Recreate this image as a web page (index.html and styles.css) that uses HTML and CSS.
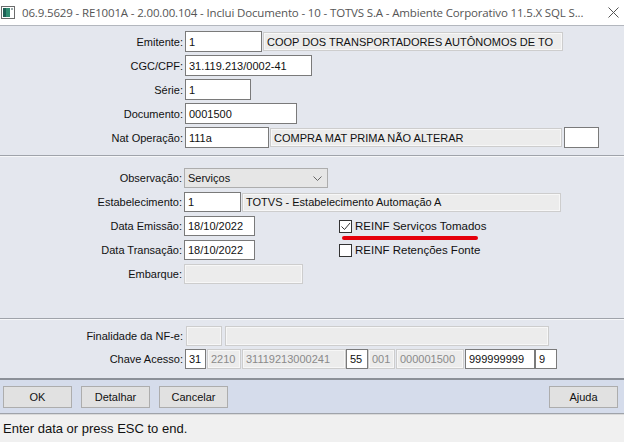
FILE: index.html
```html
<!DOCTYPE html>
<html lang="pt">
<head>
  <meta charset="UTF-8">
  <title>Inclui Documento</title>
  <link rel="stylesheet" href="styles.css">
</head>
<body>
  <div class="window">
    <div class="titlebar">
      <svg class="app-icon" width="14" height="13" viewBox="0 0 14 13">
        <rect x="0.5" y="0.5" width="13" height="12" fill="#fff" stroke="#6b6b6b"/>
        <rect x="2" y="2" width="7" height="9" fill="#2f8c70"/>
        <rect x="2" y="2" width="3" height="9" fill="#1e5f55"/>
        <rect x="10" y="2" width="2" height="2" fill="#9aa"/>
      </svg>
      <span class="title">06.9.5629 - RE1001A - 2.00.00.104 - Inclui Documento - 10 - TOTVS S.A - Ambiente Corporativo 11.5.X SQL S...</span>
      <svg class="close" width="11" height="11" viewBox="0 0 11 11">
        <path d="M0.5 0.5 L10.5 10.5 M10.5 0.5 L0.5 10.5" stroke="#555" stroke-width="1"/>
      </svg>
    </div>

    <!-- cabecalho do documento -->
    <div class="section sec-doc">
      <div class="row">
        <label>Emitente:</label>
        <span class="fld w-77 mr-1">1</span>
        <span class="fld off w-300 dark">COOP DOS TRANSPORTADORES AUTÔNOMOS DE TO</span>
      </div>
      <div class="row">
        <label>CGC/CPF:</label>
        <span class="fld w-127">31.119.213/0002-41</span>
      </div>
      <div class="row">
        <label>Série:</label>
        <span class="fld w-66">1</span>
      </div>
      <div class="row">
        <label>Documento:</label>
        <span class="fld w-112">0001500</span>
      </div>
      <div class="row">
        <label>Nat Operação:</label>
        <span class="fld w-84 mr-1">111a</span>
        <span class="fld off w-292 dark mr-2">COMPRA MAT PRIMA NÃO ALTERAR</span>
        <span class="fld w-35"></span>
      </div>
    </div>
    <div class="sep"></div>

    <!-- dados complementares -->
    <div class="section sec-obs">
      <div class="row">
        <label>Observação:</label>
        <span class="fld select w-144">Serviços
          <svg class="chev" width="9" height="5" viewBox="0 0 9 5"><polyline points="0.5,0.5 4.5,4.5 8.5,0.5" fill="none" stroke="#666"/></svg>
        </span>
      </div>
      <div class="row">
        <label>Estabelecimento:</label>
        <span class="fld w-57 mr-1">1</span>
        <span class="fld off w-319 dark">TOTVS - Estabelecimento Automação A</span>
      </div>
      <div class="row">
        <label>Data Emissão:</label>
        <span class="fld w-71">18/10/2022</span>
        <div class="check">
          <span class="box">
            <svg width="11" height="11" viewBox="0 0 11 11"><polyline points="1.5,5.5 4.5,8.5 10,2" fill="none" stroke="#333" stroke-width="1"/></svg>
          </span>
          REINF Serviços Tomados
          <span class="mark"></span>
        </div>
      </div>
      <div class="row">
        <label>Data Transação:</label>
        <span class="fld w-71">18/10/2022</span>
        <div class="check">
          <span class="box"></span>
          REINF Retenções Fonte
        </div>
      </div>
      <div class="row">
        <label>Embarque:</label>
        <span class="fld off w-119"></span>
      </div>
    </div>
    <div class="sep"></div>

    <!-- nota fiscal eletronica -->
    <div class="section sec-nfe">
      <div class="row">
        <label>Finalidade da NF-e:</label>
        <span class="fld off w-36 ml-1 mr-3"></span>
        <span class="fld off w-324"></span>
      </div>
      <div class="row">
        <label>Chave Acesso:</label>
        <span class="fld w-21 mr-1">31</span>
        <span class="fld off w-34 mr-1">2210</span>
        <span class="fld off w-104">31119213000241</span>
        <span class="fld w-22">55</span>
        <span class="fld off w-27 mr-1">001</span>
        <span class="fld off w-68 mr-1">000001500</span>
        <span class="fld w-70">999999999</span>
        <span class="fld w-22">9</span>
      </div>
    </div>

    <div class="buttons">
      <button>OK</button>
      <button>Detalhar</button>
      <button>Cancelar</button>
      <button class="right">Ajuda</button>
    </div>

    <div class="status">Enter data or press ESC to end.</div>
  </div>
</body>
</html>
```

FILE: styles.css
```css
* {
  box-sizing: border-box;
}
body {
  margin: 0;
  width: 624px;
  height: 442px;
  overflow: hidden;
  font-family: 'Liberation Sans', Arial, sans-serif;
  font-size: 11px;
  color: #111;
  background: #e4e7ee;
}
.window {
  display: flex;
  flex-direction: column;
  height: 442px;
}
.titlebar {
  height: 26px;
  background: #fff;
  border-bottom: 1px solid #b3b7be;
  display: flex;
  align-items: center;
  padding-left: 1px;
  flex-shrink: 0;
}
.app-icon {
  margin-right: 7px;
  margin-top: -1px;
}
.title {
  font-family: 'Open Sans', 'Noto Sans', sans-serif;
  font-size: 11.5px;
  color: #555;
  white-space: nowrap;
  flex: 1;
  letter-spacing: -0.15px;
}
.close {
  margin-right: 5px;
}

.section {
  display: flex;
  flex-direction: column;
}
.sec-doc {
  gap: 3px;
  padding: 5px 0 7px;
}
.sec-obs {
  gap: 4px;
  padding: 11px 0 34px;
}
.sec-nfe {
  gap: 3px;
  padding: 6px 0 9px;
}
.sep {
  height: 2px;
  border-top: 1px solid #9fa3aa;
  border-bottom: 1px solid #f6f7f9;
}
.row {
  display: flex;
  align-items: center;
  height: 21px;
}
.sec-obs .row,
.sec-nfe .row {
  height: 20px;
}
.row label {
  width: 185px;
  text-align: right;
  padding-right: 2px;
  flex-shrink: 0;
}
.sec-obs .row label {
  width: 184px;
}

.fld {
  height: 100%;
  background: #fff;
  border: 1px solid #7a7a7a;
  padding: 0 3px;
  display: flex;
  align-items: center;
  white-space: nowrap;
  overflow: hidden;
  flex-shrink: 0;
}
.fld.off {
  background: #ececec;
  border-color: #cdcdcd;
  box-shadow: inset 0 0 0 1px #f7f7f7;
  color: #8a8a8a;
}
.fld.off.dark {
  color: #111;
  height: 19px;
}
.fld.select {
  background: #e6e6e6;
  border-color: #adadad;
  position: relative;
}
.chev {
  position: absolute;
  right: 5px;
  top: 7px;
}

.w-21 { width: 21px; }
.w-22 { width: 22px; }
.w-27 { width: 27px; }
.w-34 { width: 34px; }
.w-35 { width: 35px; }
.w-36 { width: 36px; }
.w-57 { width: 57px; }
.w-66 { width: 66px; }
.w-68 { width: 68px; }
.w-70 { width: 70px; }
.w-71 { width: 71px; }
.w-77 { width: 77px; }
.w-84 { width: 84px; }
.w-104 { width: 104px; }
.w-112 { width: 112px; }
.w-119 { width: 119px; }
.w-127 { width: 127px; }
.w-144 { width: 144px; }
.w-292 { width: 292px; }
.w-300 { width: 300px; }
.w-319 { width: 319px; }
.w-324 { width: 324px; }
.ml-1 { margin-left: 1px; }
.mr-1 { margin-right: 1px; }
.mr-2 { margin-right: 2px; }
.mr-3 { margin-right: 3px; }

.check {
  display: flex;
  align-items: center;
  margin-left: 84px;
  position: relative;
  font-size: 11.5px;
}
.box {
  width: 13px;
  height: 13px;
  border: 1px solid #333;
  background: #fff;
  margin-right: 3px;
  display: flex;
  align-items: center;
  justify-content: center;
}
.mark {
  position: absolute;
  left: 3px;
  top: 16px;
  width: 136px;
  height: 4px;
  border-radius: 2px;
  background: #e5000b;
}

.buttons {
  border-top: 2px solid #8b9098;
  background: #d5dceb;
  height: 36px;
  padding: 6px 6px 0 3px;
  display: flex;
  gap: 9px;
  border-bottom: 1px solid #9fa3aa;
  flex-shrink: 0;
}
button {
  width: 69px;
  height: 22px;
  font-family: 'Liberation Sans', Arial, sans-serif;
  font-size: 11px;
  color: #111;
  background: #e1e1e1;
  border: 1px solid #adadad;
  padding: 0;
}
button.right {
  margin-left: auto;
}
.status {
  flex: 1;
  background: #f0f0f0;
  border-top: 1px solid #dadada;
  font-size: 13px;
  color: #111;
  padding: 6px 0 0 3px;
}
```
